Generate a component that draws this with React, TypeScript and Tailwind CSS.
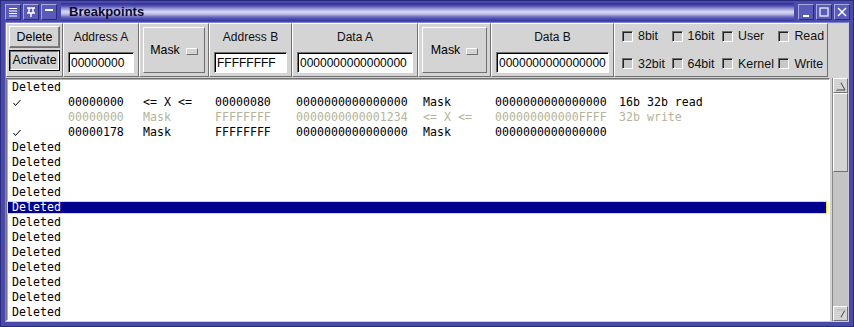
import React from "react";

const sans = "font-['Liberation_Sans',Arial,sans-serif]";
const mono = "font-['DejaVu_Sans_Mono',monospace]";

const raised = "border border-t-white border-l-white border-b-[#707070] border-r-[#707070]";
const sunken = "border border-t-[#707070] border-l-[#707070] border-b-white border-r-white";

const colWidths = [56, 75, 72, 81, 127, 72, 124];

type Row = { cells: string[]; check?: boolean; dim?: boolean; selected?: boolean };

const deleted = (selected = false): Row => ({ cells: ["Deleted"], selected });

const rows: Row[] = [
  deleted(),
  { check: true, cells: ["", "00000000", "<= X <=", "00000080", "0000000000000000", "Mask", "0000000000000000", "16b 32b read"] },
  { dim: true, cells: ["", "00000000", "Mask", "FFFFFFFF", "0000000000001234", "<= X <=", "000000000000FFFF", "32b write"] },
  { check: true, cells: ["", "00000178", "Mask", "FFFFFFFF", "0000000000000000", "Mask", "0000000000000000", ""] },
  deleted(),
  deleted(),
  deleted(),
  deleted(),
  deleted(true),
  deleted(),
  deleted(),
  deleted(),
  deleted(),
  deleted(),
  deleted(),
  deleted(),
];

function TitleButton({ children }: { children: React.ReactNode }) {
  return (
    <div className="w-[16px] h-[16px] bg-[#5a5ab8] border border-t-[#a8a8e0] border-l-[#a8a8e0] border-b-[#2a2a80] border-r-[#2a2a80] flex items-center justify-center">
      <svg width="12" height="12" viewBox="0 0 12 12" fill="none" stroke="white" strokeWidth="1.5">
        {children}
      </svg>
    </div>
  );
}

function Check() {
  return (
    <svg width="10" height="8" viewBox="0 0 10 8" fill="none" stroke="black" strokeWidth="1">
      <path d="M1.5 4 L3.5 6.5 L8.5 1" />
    </svg>
  );
}

function Field({ label, value, width }: { label: string; value: string; width: number }) {
  return (
    <div className={`${raised} h-full flex flex-col items-center px-[4px]`} style={{ width }}>
      <div className="text-[12px] text-[#111] mt-[6px] leading-[14px]">{label}</div>
      <div className={`${sunken} mt-[8px] w-full h-[21px] bg-white shadow-[inset_1px_1px_0_#000] flex items-center pl-[2px] text-[12px] overflow-hidden whitespace-nowrap`}>
        {value}
      </div>
    </div>
  );
}

function MaskCell({ width }: { width: number }) {
  return (
    <div className={`${raised} h-full p-[3px]`} style={{ width }}>
      <div className={`${raised} h-full border-b-[#404040] border-r-[#404040] flex items-center justify-center gap-[6px]`}>
        <span className="text-[12.4px]">Mask</span>
        <span className={`${raised} w-[12px] h-[7px] bg-[#d4d4d4] mt-[2px]`} />
      </div>
    </div>
  );
}

function Box({ label, w }: { label: string; w: number }) {
  return (
    <div className="flex items-center gap-[5px]" style={{ width: w }}>
      <span className={`${sunken} w-[11px] h-[11px] bg-[#c8c8c8] shadow-[inset_1px_1px_0_#222]`} />
      <span className="text-[12.4px] text-[#111]">{label}</span>
    </div>
  );
}

export default function App() {
  return (
    <div className={`${sans} w-[854px] h-[327px] bg-[#4a4aaa] flex flex-col overflow-hidden border border-[#2a2a80]`}>
      {/* title bar */}
      <div className="h-[21px] flex items-center pl-[4px] pr-[3px] gap-[2px] shrink-0">
        <TitleButton>
          <path d="M2 2.5 H10 M2 5 H10 M2 7.5 H10 M2 10 H10" strokeWidth="1" />
        </TitleButton>
        <TitleButton>
          <path d="M2 2 H10 M4 2 V7 M8 2 V7 M2 7 H10 M6 7 V11" />
        </TitleButton>
        <TitleButton>
          <path d="M2 4 H10" strokeWidth="2" />
        </TitleButton>
        <div className="flex-1 h-[18px] ml-[2px] bg-[linear-gradient(to_bottom,#2e2e92_0%,#4a4ab0_15%,#9a9ad6_32%,#dcdcf4_50%,#b0b0e0_64%,#6060bc_80%,#34349c_100%)] flex items-center pl-[8px]">
          <span className="font-bold text-[13px] text-[#0a0a30]">Breakpoints</span>
        </div>
        <div className="flex gap-[2px] ml-[2px]">
          <TitleButton>
            <path d="M3 10 H9" strokeWidth="2" />
          </TitleButton>
          <TitleButton>
            <rect x="2" y="2" width="8" height="8" strokeWidth="1.2" />
          </TitleButton>
          <TitleButton>
            <path d="M2 2 L10 10 M10 2 L2 10" />
          </TitleButton>
        </div>
      </div>

      {/* body */}
      <div className="flex-1 flex flex-col mx-[4px] mb-[4px] bg-[#d4d4d4] border border-t-[#8080d0] border-l-[#8080d0] border-b-[#c8c8ec] border-r-[#c8c8ec] min-h-0">
        {/* toolbar */}
        <div className="h-[54px] flex shrink-0">
          <div className={`${raised} w-[57px] h-full flex flex-col items-center pt-[2px] gap-[2px]`}>
            <div className={`${raised} border-b-[#303030] border-r-[#303030] w-[51px] h-[22px] bg-[#d4d4d4] flex items-center justify-center text-[12.4px] shadow-[inset_-1px_-1px_0_#808080]`}>
              Delete
            </div>
            <div className="w-[51px] h-[21px] border border-black bg-[#d4d4d4] flex">
              <div className={`${sunken} flex-1 flex items-center justify-center text-[12.4px] border-t-[#404040] border-l-[#404040]`}>Activate</div>
            </div>
          </div>
          <Field label="Address A" value="00000000" width={76} />
          <MaskCell width={70} />
          <Field label="Address B" value="FFFFFFFF" width={83} />
          <Field label="Data A" value="0000000000000000" width={126} />
          <MaskCell width={73} />
          <Field label="Data B" value="0000000000000000" width={123} />
          <div className={`${raised} border-b-[#404040] border-r-[#404040] w-[214px] h-full flex flex-col justify-center gap-[9px] pl-[7px]`}>
            <div className="flex">
              <Box label="8bit" w={51} />
              <Box label="16bit" w={52} />
              <Box label="User" w={58} />
              <Box label="Read" w={50} />
            </div>
            <div className="flex">
              <Box label="32bit" w={51} />
              <Box label="64bit" w={52} />
              <Box label="Kernel" w={58} />
              <Box label="Write" w={50} />
            </div>
          </div>
        </div>

        {/* list + scrollbar */}
        <div className="flex-1 flex min-h-0 mt-[1px]">
          <div className={`${sunken} flex-1 bg-white overflow-hidden pt-[1px] pr-[2px] shadow-[inset_1px_1px_0_#b0b0b0] ${mono} text-[11.6px]`}>
            {rows.map((r, i) => (
              <div
                key={i}
                className={
                  r.selected
                    ? "h-[13px] my-[1px] flex items-center pl-[4px] bg-[#00008f] text-white border border-[#f0f000]"
                    : `h-[15px] flex items-center pl-[5px] whitespace-nowrap ${r.dim ? "text-[#b4b49a]" : "text-black"}`
                }
              >
                {r.cells.length === 1 ? (
                  <span>{r.cells[0]}</span>
                ) : (
                  r.cells.map((c, j) => (
                    <span key={j} className="shrink-0" style={colWidths[j] ? { width: colWidths[j] } : undefined}>
                      {j === 0 && r.check ? <Check /> : c}
                    </span>
                  ))
                )}
              </div>
            ))}
          </div>
          {/* scrollbar */}
          <div className="w-[16px] ml-[2px] bg-[#c4c4c4] flex flex-col border-l border-[#888]">
            <div className={`${raised} h-[15px] bg-[#d4d4d4] flex items-center justify-center`}>
              <svg width="11" height="10" viewBox="0 0 11 10" fill="none">
                <path d="M5.5 1 L10 9 H1 Z" stroke="#404040" />
                <path d="M5.5 1 L1 9" stroke="white" />
              </svg>
            </div>
            <div className={`${raised} border-b-[#202020] border-r-[#202020] h-[79px] bg-[#d4d4d4]`} />
            <div className="flex-1" />
            <div className={`${raised} h-[15px] bg-[#d4d4d4] flex items-center justify-center`}>
              <svg width="11" height="10" viewBox="0 0 11 10" fill="none">
                <path d="M1 1 H10 L5.5 9 Z" stroke="#404040" />
                <path d="M1 1 H10 M1 1 L5.5 9" stroke="white" />
              </svg>
            </div>
          </div>
        </div>
      </div>
    </div>
  );
}
